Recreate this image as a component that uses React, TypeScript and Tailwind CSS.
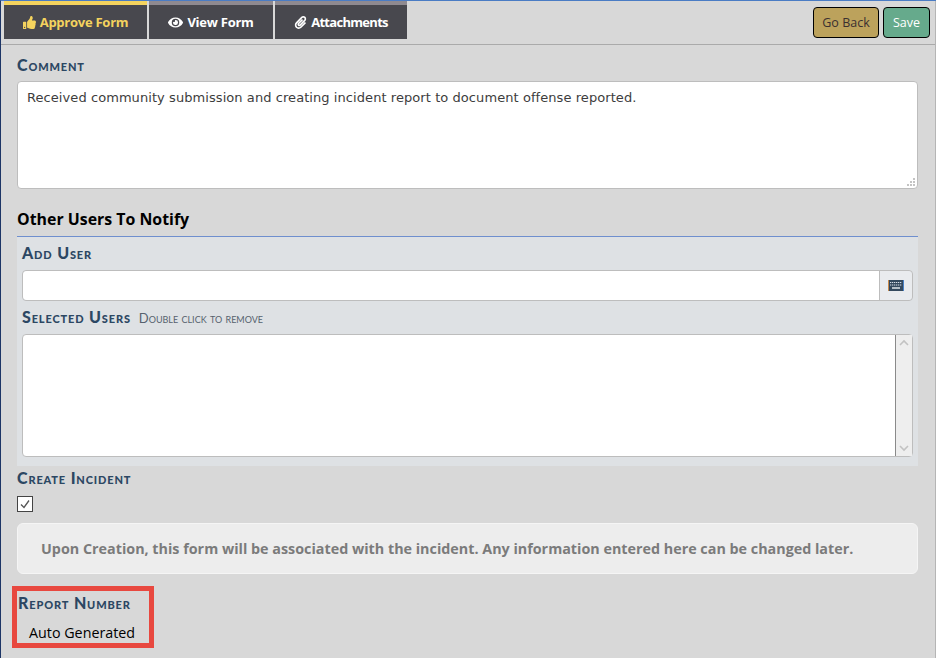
import { FaEye, FaPaperclip, FaThumbsUp } from 'react-icons/fa';
import type { ReactNode } from 'react';

const labelClass =
  "font-['Lato',sans-serif] text-[16px] leading-[18px] font-black tracking-[0.85px] text-[#2c4763] [font-variant:small-caps]";

function Tab({
  active,
  width,
  children,
}: {
  active?: boolean;
  width: string;
  children: ReactNode;
}) {
  return (
    <div
      className={`flex h-[38px] items-center justify-center gap-1 border-t-4 bg-[#48484e] pt-[1px] text-[13px] font-bold tracking-[-0.25px] ${width} ${
        active ? 'border-[#f4d35e] text-[#f4d35e]' : 'border-[#8f8a90] text-white'
      }`}
    >
      {children}
    </div>
  );
}

function KeyboardIcon() {
  return (
    <svg width="16" height="11" viewBox="0 0 16 11">
      <rect x="0" y="0" width="16" height="11" fill="#34495e" />
      <rect x="0" y="0" width="1" height="11" fill="#c98a4a" />
      <rect x="15" y="0" width="1" height="11" fill="#4a82c8" />
      <path d="M2 2.5h12M2 5h12" stroke="#d5dde6" strokeWidth="1.2" strokeDasharray="1.3 0.7" />
      <path d="M4 8h8" stroke="#eef2f6" strokeWidth="1.4" />
    </svg>
  );
}

export default function App() {
  return (
    <div className="relative h-[658px] w-[936px] overflow-hidden border-t border-l border-t-[#4a7cc4] border-l-[#1d3566] bg-[#d8d8d8] font-['Open_Sans',sans-serif]">
      <header className="flex h-[44px] items-start justify-between border-b border-[#aaaaaa] pr-[6px] pl-[3px]">
        <div className="flex gap-[2px]">
          <Tab active width="w-[143px]">
            <FaThumbsUp className="text-[13px]" />
            Approve Form
          </Tab>
          <Tab width="w-[124px]">
            <FaEye className="text-[15px]" />
            View Form
          </Tab>
          <Tab width="w-[132px]">
            <FaPaperclip className="text-[13px]" />
            <span className="tracking-[-0.7px]">Attachments</span>
          </Tab>
        </div>
        <div className="mt-[6px] flex gap-[4px] text-[12.5px]">
          <button className="h-[31px] w-[66px] rounded-[4px] border border-black bg-[#bca25c] pt-[1px] text-[#3b3030]">
            Go Back
          </button>
          <button className="h-[31px] w-[47px] rounded-[4px] border border-black bg-[#66aa8c] pt-[1px] text-white">
            Save
          </button>
        </div>
      </header>

      <main className="pr-[18px] pl-[16px]">
        <div className={`mt-[11px] ${labelClass}`}>Comment</div>
        <div className="relative mt-[7px] h-[108px] rounded-[4px] border border-[#bdbdbd] bg-white px-[9px] py-[7px] font-['DejaVu_Sans',sans-serif] text-[13px] leading-[18px] tracking-[0.07px] text-[#3d3d3d]">
          Received community submission and creating incident report to document offense reported.
          <svg className="absolute right-[1px] bottom-[1px]" width="10" height="10" viewBox="0 0 10 10">
            <path d="M7 1h2v2H7zM4 4h2v2H4zM7 4h2v2H7zM1 7h2v2H1zM4 7h2v2H4zM7 7h2v2H7z" fill="#c4c4c4" />
          </svg>
        </div>

        <h2 className="mt-[19px] text-[15.9px] leading-[22px] font-bold text-black">Other Users To Notify</h2>

        <section className="mt-[6px] h-[230px] border-t border-[#6f8fce] bg-[#dee1e4] px-[5px] pt-[7px]">
          <div className={labelClass}>Add User</div>
          <div className="mt-[8px] flex h-[31px] rounded-[4px] border border-[#bdbdbd]">
            <div className="flex-1 rounded-l-[4px] bg-white" />
            <div className="flex w-[33px] items-center justify-center rounded-r-[4px] border-l border-[#bdbdbd] bg-[#e9ebee]">
              <KeyboardIcon />
            </div>
          </div>
          <div className="mt-[7px] flex items-baseline gap-[8px]">
            <span className={labelClass}>Selected Users</span>
            <span className="font-['Lato',sans-serif] text-[13px] leading-[18px] text-[#56616e] [font-variant:small-caps]">
              Double click to remove
            </span>
          </div>
          <div className="mt-[7px] flex h-[123px] rounded-[4px] border border-[#bdbdbd] bg-white">
            <div className="flex-1" />
            <div className="flex w-[17px] flex-col items-center justify-between border-l border-[#8a8a8a] bg-[#eeeeee] py-[4px]">
              <svg width="12" height="8" viewBox="0 0 12 8" fill="none" stroke="#c2c2c2" strokeWidth="1.6">
                <path d="M2 6l4-4 4 4" />
              </svg>
              <svg width="12" height="8" viewBox="0 0 12 8" fill="none" stroke="#c2c2c2" strokeWidth="1.6">
                <path d="M2 2l4 4 4-4" />
              </svg>
            </div>
          </div>
        </section>

        <div className={`mt-[3px] ${labelClass}`}>Create Incident</div>
        <div className="mt-[9px] flex h-[16px] w-[16px] items-center justify-center border border-[#444444] bg-white">
          <svg width="12" height="12" viewBox="0 0 12 12" fill="none" stroke="#555555" strokeWidth="1.3">
            <path d="M2 6.5l3 3 5-7" />
          </svg>
        </div>

        <div className="mt-[11px] flex h-[51px] items-center rounded-[6px] border border-[#f5f5f5] bg-[#ededed] pl-[23px] text-[14.33px] font-bold text-[#7b7b7b]">
          Upon Creation, this form will be associated with the incident. Any information entered here can be changed later.
        </div>

        <div className={`mt-[20px] pl-[1px] ${labelClass}`}>Report Number</div>
        <div className="mt-[11px] pl-[12px] text-[14.3px] leading-[20px] text-black">Auto Generated</div>
      </main>

      <div className="absolute top-[585px] left-[11px] h-[62px] w-[142px] border-[5px] border-[#e8483f]" />
      <div className="absolute top-0 right-0 h-full w-px bg-[#b5b5b5]" />
    </div>
  );
}
